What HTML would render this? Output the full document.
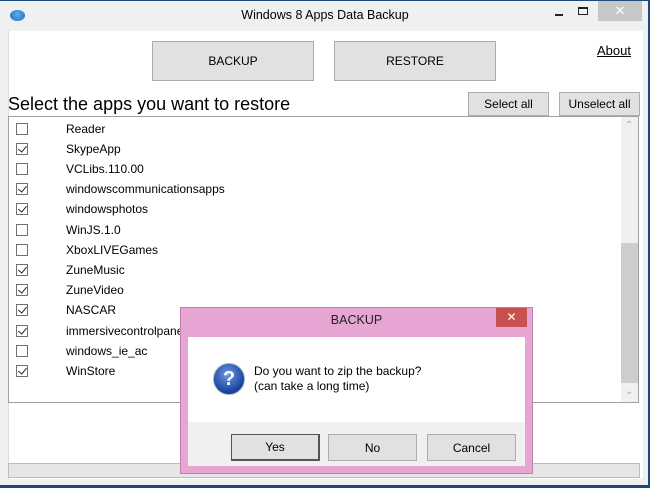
<!DOCTYPE html>
<html><head><style>
body{margin:0;width:650px;height:488px;overflow:hidden;background:#f0f0f0;font-family:"Liberation Sans",sans-serif;position:relative}
.a{position:absolute}
.btn{position:absolute;background:#e1e1e1;border:1px solid #adadad;box-sizing:border-box;display:flex;align-items:center;justify-content:center;font-size:12px;color:#000}
.cb{position:absolute;left:16px;width:12px;height:12px;border:1px solid #707070;background:#fff;box-sizing:border-box}
.cb.c::after{content:"";position:absolute;left:3px;top:0px;width:4px;height:7px;border:solid #222;border-width:0 1.6px 1.6px 0;transform:rotate(40deg)}
.it{position:absolute;left:66px;font-size:12px;color:#000}
</style></head><body>
<div class="a" style="left:0;top:0;width:650px;height:1px;background:#1c4a7a"></div>
<div class="a" style="left:648px;top:0;width:2px;height:488px;background:#1c4a7a"></div>
<div class="a" style="left:0;top:485px;width:650px;height:3px;background:#1c4a7a"></div>
<div class="a" style="left:10px;top:10px;width:15px;height:11px;border-radius:50%;background:radial-gradient(circle at 50% 40%,#5ab0ef,#1b6bc2)"></div>
<div class="a" style="left:0;top:8px;width:650px;text-align:center;font-size:12.5px;color:#000">Windows 8 Apps Data Backup</div>
<div class="a" style="left:555px;top:14px;width:8px;height:2px;background:#222"></div>
<div class="a" style="left:578px;top:7px;width:10px;height:8px;border:1px solid #222;border-top-width:2px;box-sizing:border-box"></div>
<div class="a" style="left:598px;top:1px;width:44px;height:20px;background:#c7c7c7;color:#fff;font-size:13px;text-align:center;line-height:20px">✕</div>
<div class="a" style="left:8px;top:31px;width:634px;height:448px;background:#fff;border-left:1px solid #ddd"></div>
<div class="btn" style="left:152px;top:41px;width:162px;height:40px">BACKUP</div>
<div class="btn" style="left:334px;top:41px;width:162px;height:40px">RESTORE</div>
<div class="a" style="left:597px;top:43px;font-size:13px;text-decoration:underline">About</div>
<div class="a" style="left:8px;top:94px;font-size:18px;color:#000">Select the apps you want to restore</div>
<div class="btn" style="left:468px;top:92px;width:81px;height:24px">Select all</div>
<div class="btn" style="left:559px;top:92px;width:81px;height:24px">Unselect all</div>
<div class="a" style="left:8px;top:116px;width:631px;height:287px;border:1px solid #a0a0a0;box-sizing:border-box;background:#fff"></div>
<div class="a" style="left:621px;top:117px;width:17px;height:285px;background:#f0f0f0"></div>
<div class="a" style="left:621px;top:243px;width:17px;height:140px;background:#cdcdcd"></div>
<div class="a" style="left:625px;top:120px;font-size:10px;color:#aaa">⌃</div>
<div class="a" style="left:625px;top:386px;font-size:10px;color:#aaa">⌄</div>
<div class="cb" style="top:123px"></div><div class="it" style="top:122px">Reader</div>
<div class="cb c" style="top:143px"></div><div class="it" style="top:142px">SkypeApp</div>
<div class="cb" style="top:163px"></div><div class="it" style="top:162px">VCLibs.110.00</div>
<div class="cb c" style="top:183px"></div><div class="it" style="top:182px">windowscommunicationsapps</div>
<div class="cb c" style="top:203px"></div><div class="it" style="top:202px">windowsphotos</div>
<div class="cb" style="top:224px"></div><div class="it" style="top:223px">WinJS.1.0</div>
<div class="cb" style="top:244px"></div><div class="it" style="top:243px">XboxLIVEGames</div>
<div class="cb c" style="top:264px"></div><div class="it" style="top:263px">ZuneMusic</div>
<div class="cb c" style="top:284px"></div><div class="it" style="top:283px">ZuneVideo</div>
<div class="cb c" style="top:304px"></div><div class="it" style="top:303px">NASCAR</div>
<div class="cb c" style="top:325px"></div><div class="it" style="top:324px">immersivecontrolpanel</div>
<div class="cb" style="top:345px"></div><div class="it" style="top:344px">windows_ie_ac</div>
<div class="cb c" style="top:365px"></div><div class="it" style="top:364px">WinStore</div>
<div class="a" style="left:8px;top:463px;width:632px;height:15px;background:#e6e6e6;border:1px solid #bcbcbc;box-sizing:border-box"></div>
<div class="a" style="left:180px;top:307px;width:353px;height:167px;background:#e6a5d2;border:1px solid #c27fae;box-sizing:border-box"></div>
<div class="a" style="left:180px;top:313px;width:353px;text-align:center;font-size:12.5px;color:#222">BACKUP</div>
<div class="a" style="left:496px;top:308px;width:31px;height:19px;background:#c75050;color:#fff;font-size:12px;text-align:center;line-height:19px">✕</div>
<div class="a" style="left:188px;top:337px;width:337px;height:129px;background:#fff"></div>
<div class="a" style="left:188px;top:422px;width:337px;height:44px;background:#f0f0f0"></div>
<div class="a" style="left:213px;top:363px;width:32px;height:32px;border-radius:50%;background:radial-gradient(circle at 45% 35%,#6a9be8,#1a3f9c 70%);border:1px solid #9bb;box-sizing:border-box;color:#fff;font-weight:bold;font-size:20px;text-align:center;line-height:30px">?</div>
<div class="a" style="left:254px;top:364px;font-size:12px;line-height:15px;color:#000">Do you want to zip the backup?<br>(can take a long time)</div>
<div class="btn" style="left:231px;top:434px;width:89px;height:27px;border:1px solid #555;border-width:1px 2px 2px 1px">Yes</div>
<div class="btn" style="left:328px;top:434px;width:89px;height:27px">No</div>
<div class="btn" style="left:427px;top:434px;width:89px;height:27px">Cancel</div>
</body></html>
